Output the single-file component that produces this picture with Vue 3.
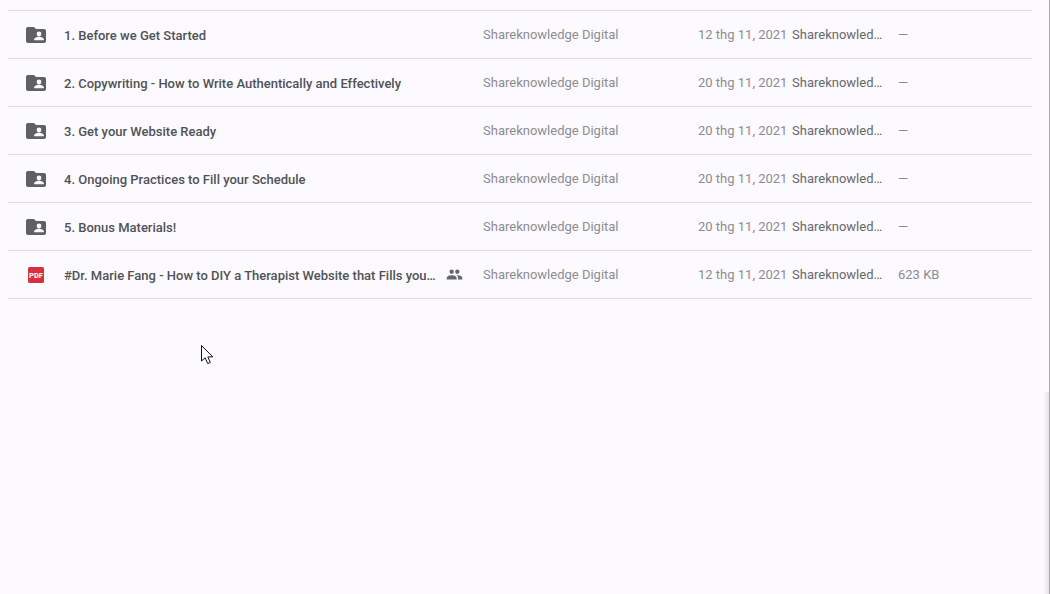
<template>
  <div class="page">
    <div class="list">
      <div v-for="row in rows" :key="row.name" class="row">
        <div class="icon-cell">
          <svg v-if="row.type === 'folder'" class="folder" width="24" height="24" viewBox="0 0 24 24">
            <path fill="#5f6066" d="M10 4H4c-1.100 0-2 .9-2 2v12c0 1.100.9 2 2 2h16c1.100 0 2-.9 2-2V8c0-1.100-.9-2-2-2h-8l-2-2z" />
            <circle fill="#fcfafe" cx="15" cy="11" r="2.400" />
            <path fill="#fcfafe" d="M10.200 17.200v-.9c0-1.600 3.200-2.500 4.800-2.500s4.800.9 4.800 2.500v.9z" />
          </svg>
          <svg v-else width="16" height="16" viewBox="0 0 16 16">
            <rect width="16" height="16" rx="1.500" fill="#d9303e" />
            <text x="8" y="10.800" class="pdf-label" text-anchor="middle">PDF</text>
          </svg>
        </div>
        <div class="name-cell">
          <span class="name">{{ row.name }}</span>
          <svg v-if="row.shared" class="shared" width="17" height="17" viewBox="0 0 24 24">
            <path fill="#63666b" d="M16 11c1.660 0 2.990-1.340 2.990-3S17.660 5 16 5s-3 1.340-3 3 1.340 3 3 3zm-8 0c1.660 0 2.990-1.340 2.990-3S9.660 5 8 5 5 6.340 5 8s1.340 3 3 3zm0 2c-2.330 0-7 1.170-7 3.500V19h14v-2.500c0-2.330-4.670-3.500-7-3.500zm8 0c-.29 0-.62.020-.97.050 1.160.840 1.970 1.970 1.970 3.450V19h6v-2.500c0-2.330-4.670-3.500-7-3.500z" />
          </svg>
        </div>
        <div class="owner">Shareknowledge Digital</div>
        <div class="date">{{ row.date }}</div>
        <div class="modifier">Shareknowled…</div>
        <div class="size">{{ row.size }}</div>
      </div>
    </div>

    <svg class="cursor" width="14" height="20" viewBox="0 0 14 20">
      <path fill="#fff" stroke="#111" stroke-width="1" d="M.5.500v15.500l3.700-3.200 2.500 5.800 2.600-1.100-2.500-5.600h5z" />
    </svg>
    <div class="edge-shadow"></div>
  </div>
</template>

<script setup>
const rows = [
  { name: '1. Before we Get Started', type: 'folder', date: '12 thg 11, 2021', size: '—' },
  { name: '2. Copywriting - How to Write Authentically and Effectively', type: 'folder', date: '20 thg 11, 2021', size: '—' },
  { name: '3. Get your Website Ready', type: 'folder', date: '20 thg 11, 2021', size: '—' },
  { name: '4. Ongoing Practices to Fill your Schedule', type: 'folder', date: '20 thg 11, 2021', size: '—' },
  { name: '5. Bonus Materials!', type: 'folder', date: '20 thg 11, 2021', size: '—' },
  { name: '#Dr. Marie Fang - How to DIY a Therapist Website that Fills you…', type: 'pdf', shared: true, date: '12 thg 11, 2021', size: '623 KB' }
]
</script>

<style>
html,
body {
  margin: 0;
  background: #fcfafe;
}
</style>

<style scoped>
.page {
  position: relative;
  box-sizing: border-box;
  width: 1050px;
  height: 594px;
  padding: 10px 17px 0 8px;
  overflow: hidden;
  background: #fcfafe;
  border-right: 1px solid #aaa8ac;
  font-family: Roboto, "Liberation Sans", sans-serif;
  font-size: 13px;
}

.list {
  border-top: 1px solid #dcdcdf;
}

.row {
  display: grid;
  grid-template-columns: 56px 419px 215px 94px 106px 1fr;
  align-items: center;
  height: 47px;
  border-bottom: 1px solid #dcdcdf;
}

.icon-cell {
  display: flex;
  justify-content: center;
}

.name-cell {
  display: flex;
  align-items: center;
  min-width: 0;
  padding-top: 1px;
}

.name {
  width: 372px;
  white-space: nowrap;
  color: #505258;
  font-weight: 500;
}

.shared {
  margin-left: 10px;
  margin-top: -2px;
}

.pdf-label {
  font-family: Roboto, "Liberation Sans", sans-serif;
  font-size: 7.500px;
  font-weight: 900;
  fill: #fbeff0;
}

.owner,
.date,
.size {
  color: #8b8d92;
  white-space: nowrap;
}

.modifier {
  color: #66686d;
  white-space: nowrap;
}

.cursor {
  position: absolute;
  left: 201px;
  top: 345px;
}

.edge-shadow {
  position: absolute;
  right: 0;
  top: 392px;
  bottom: 0;
  width: 6px;
  background: linear-gradient(to right, rgba(200, 198, 202, 0), rgba(200, 198, 202, 0.45));
}
</style>
